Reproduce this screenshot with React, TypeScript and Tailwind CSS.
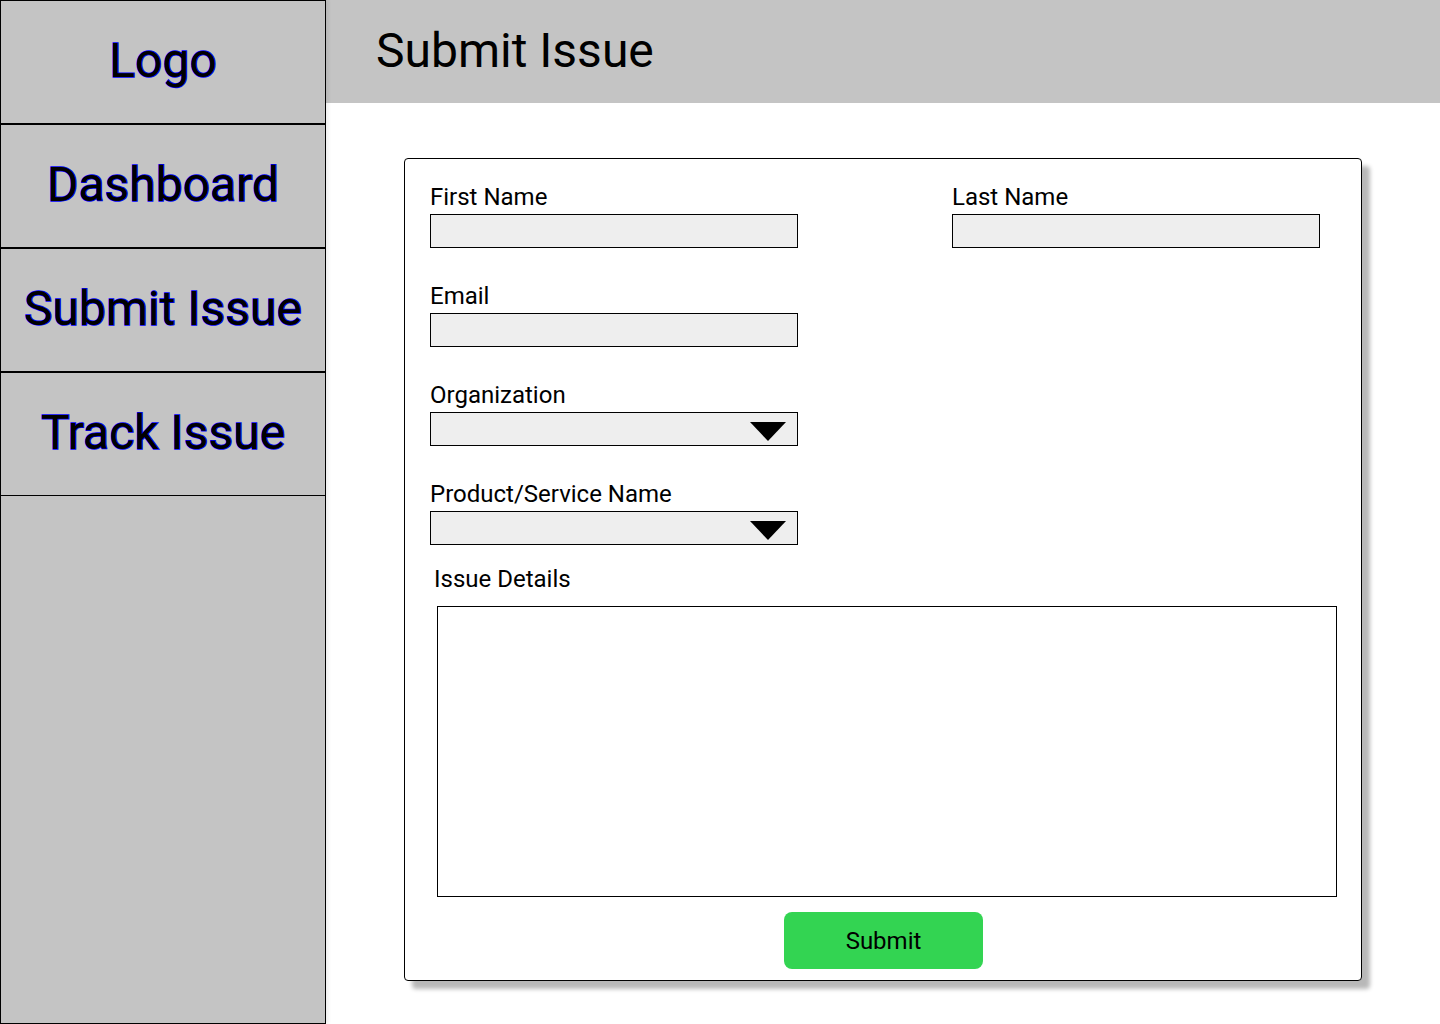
import React from "react";

const navItems = ["Logo", "Dashboard", "Submit Issue", "Track Issue"];

function Field({ label, select }: { label: string; select?: boolean }) {
  return (
    <div className="flex flex-col w-[368px]">
      <div className="h-[28px] leading-[28px] text-[24px] text-black">{label}</div>
      <div className="relative mt-[3px] h-[34px] w-[368px] border border-black bg-[#eeeeee]">
        {select && (
          <svg
            className="absolute right-[11px] top-[9px]"
            width="36"
            height="19"
            viewBox="0 0 36 19"
          >
            <polygon points="0,0 36,0 18,19" fill="#000" />
          </svg>
        )}
      </div>
    </div>
  );
}

export default function App() {
  return (
    <div
      className="flex h-[1024px] w-[1440px] overflow-hidden bg-white"
      style={{ fontFamily: "Roboto, 'Noto Sans', sans-serif" }}
    >
      <aside className="flex h-full w-[326px] shrink-0 flex-col bg-[#c4c4c4] shadow-[2px_0_4px_rgba(0,0,0,0.08)] z-10">
        {navItems.map((item) => (
          <div
            key={item}
            className="flex h-[124px] shrink-0 items-center justify-center border border-black pb-[2px] text-[48px] leading-[56px] text-black [-webkit-text-stroke:1.5px_#0000ff] [paint-order:stroke_fill]"
          >
            {item}
          </div>
        ))}
        <div className="flex-1 border-x border-b border-black" />
      </aside>
      <main className="flex flex-1 flex-col">
        <header className="flex h-[103px] shrink-0 items-center bg-[#c4c4c4] pl-[50px] pb-[2px]">
          <h1 className="text-[48px] leading-[56px] text-black">Submit Issue</h1>
        </header>
        <div className="pl-[78px] pt-[55px]">
          <div className="flex h-[823px] w-[958px] flex-col rounded-[4px] border border-black bg-white pl-[25px] pt-[24px] shadow-[8px_8px_4px_rgba(0,0,0,0.28)]">
            <div className="flex gap-[154px]">
              <Field label="First Name" />
              <Field label="Last Name" />
            </div>
            <div className="mt-[34px]">
              <Field label="Email" />
            </div>
            <div className="mt-[34px]">
              <Field label="Organization" select />
            </div>
            <div className="mt-[34px]">
              <Field label="Product/Service Name" select />
            </div>
            <div className="mt-[20px] ml-[4px] h-[28px] leading-[28px] text-[24px] text-black">
              Issue Details
            </div>
            <div className="mt-[13px] ml-[7px] h-[291px] w-[900px] border border-black bg-white" />
            <div className="mt-[15px] ml-[354px] flex">
              <button className="flex h-[57px] w-[199px] items-center justify-center rounded-[8px] bg-[#33d452] text-[24px] text-black">
                Submit
              </button>
            </div>
          </div>
        </div>
      </main>
    </div>
  );
}
